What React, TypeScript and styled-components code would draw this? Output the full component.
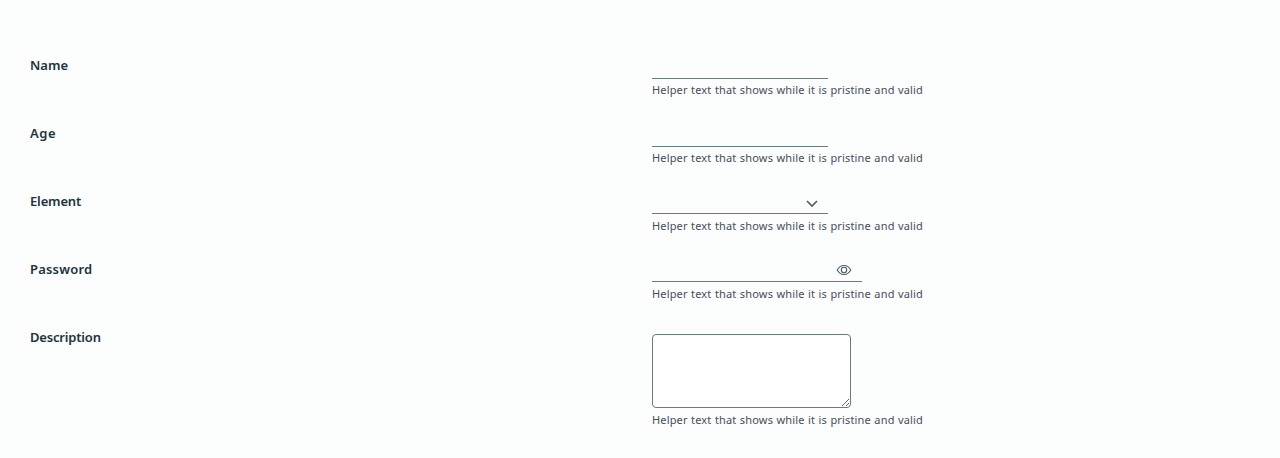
import React from "react";
import styled, { createGlobalStyle } from "styled-components";

const Global = createGlobalStyle`
  * { box-sizing: border-box; }
  html, body { margin: 0; background: #fcfdfd; }
  body { font-family: "Noto Sans", sans-serif; overflow: hidden; }
`;

const Form = styled.form`
  display: flex;
  flex-direction: column;
  height: 458px;
  padding: 53px 30px 0;
`;

const Row = styled.div`
  display: grid;
  grid-template-columns: 622px 1fr;
  height: 68px;
  flex: none;
`;

const Label = styled.label<{ $tracking?: number }>`
  font: 600 13px/24px "Noto Sans", sans-serif;
  letter-spacing: ${(p) => p.$tracking ?? 0}px;
  color: #21333b;
`;

const Control = styled.div`
  display: flex;
  flex-direction: column;
  align-items: flex-start;
`;

const Field = styled.div<{ $width?: number; $height?: number }>`
  display: flex;
  align-items: center;
  justify-content: flex-end;
  width: ${(p) => p.$width ?? 176}px;
  height: ${(p) => p.$height ?? 26}px;
  padding-right: 10px;
  border-bottom: 1px solid #6a7a81;
`;

const Input = styled.input`
  flex: 1;
  min-width: 0;
  height: 20px;
  padding: 0 6px;
  border: 0;
  outline: 0;
  background: transparent;
`;

const Area = styled.textarea`
  display: block;
  width: 199px;
  height: 74px;
  margin-top: 9px;
  border: 1px solid #6a7a81;
  border-radius: 4px;
  background: #fff;
  outline: 0;
`;

const Helper = styled.span<{ $top?: number }>`
  margin-top: ${(p) => p.$top ?? 3}px;
  font: 400 11px/16px "Noto Sans", sans-serif;
  letter-spacing: 0.16px;
  word-spacing: 0.4px;
  color: #454e5c;
`;

const helperText = "Helper text that shows while it is pristine and valid";

const Icon = styled.svg<{ $drop: number }>`
  flex: none;
  margin-top: ${(p) => p.$drop}px;
`;

const Chevron = () => (
  <Icon $drop={6} width="12" height="8" viewBox="0 0 12 8" fill="none" stroke="#4d5d66" strokeWidth="1.6">
    <path d="M1 1l5 5 5-5" />
  </Icon>
);

const Eye = () => (
  <Icon $drop={2} width="16" height="12" viewBox="0 0 16 12" fill="none" stroke="#4d5d66" strokeWidth="1.1">
    <path d="M1.300 6c1.500-3 3.900-4.500 6.700-4.500S13.200 3 14.700 6c-1.500 3-3.900 4.500-6.700 4.500S2.800 9 1.300 6z" />
    <circle cx="8" cy="6" r="2.700" />
  </Icon>
);

export default function App() {
  return (
    <>
      <Global />
      <Form>
        <Row><Label>Name</Label><Control><Field><Input /></Field><Helper>{helperText}</Helper></Control></Row>
        <Row><Label $tracking={0.6}>Age</Label><Control><Field><Input /></Field><Helper>{helperText}</Helper></Control></Row>
        <Row><Label $tracking={-0.15}>Element</Label><Control><Field $height={25}><Input /><Chevron /></Field><Helper $top={4}>{helperText}</Helper></Control></Row>
        <Row><Label $tracking={0.2}>Password</Label><Control><Field $width={210} $height={25}><Input type="password" /><Eye /></Field><Helper $top={4}>{helperText}</Helper></Control></Row>
        <Row><Label $tracking={-0.18}>Description</Label><Control><Area /><Helper $top={4}>{helperText}</Helper></Control></Row>
      </Form>
    </>
  );
}
